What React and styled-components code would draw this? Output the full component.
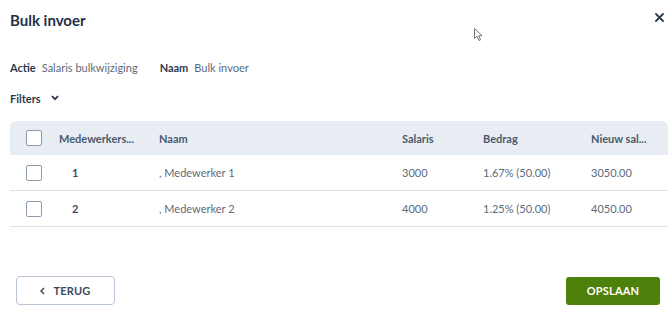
import React from "react";
import styled, { createGlobalStyle } from "styled-components";

const GlobalStyle = createGlobalStyle`
  html, body {
    margin: 0;
    padding: 0;
    background: #ffffff;
  }
  body {
    font-family: "Lato", "Noto Sans", sans-serif;
    color: #2b3a4b;
  }
`;

const Dialog = styled.div`
  position: relative;
  width: 670px;
  height: 311px;
  box-sizing: border-box;
  padding: 0 2px 0 10px;
  overflow: hidden;
`;

const Header = styled.div`
  display: flex;
  align-items: center;
  justify-content: space-between;
  height: 40px;
  padding-left: 0;
`;

const Title = styled.h1`
  margin: 0;
  font-size: 15px;
  font-weight: 700;
  color: #1f3147;
`;

const CloseButton = styled.button`
  border: none;
  background: none;
  padding: 0;
  width: 12px;
  height: 12px;
  margin-right: 3px;
  margin-top: -6px;
  display: flex;
  align-items: center;
  justify-content: center;
  cursor: pointer;
`;

const Meta = styled.div`
  display: flex;
  align-items: center;
  height: 16px;
  margin-top: 19px;
  font-size: 11px;
`;

const MetaItem = styled.div`
  display: flex;
  gap: 6px;
  margin-right: ${(p) => p.$gap || 0}px;
`;

const Label = styled.span`
  font-weight: 700;
  color: #2b3a4b;
`;

const Value = styled.span`
  color: #5b6b7d;
`;

const Filters = styled.div`
  display: flex;
  align-items: center;
  gap: 10px;
  height: 16px;
  margin-top: 15px;
  font-size: 11px;
  font-weight: 700;
  color: #2b3a4b;
`;

const Table = styled.div`
  margin-top: 15px;
  width: 658px;
`;

const Row = styled.div`
  display: grid;
  grid-template-columns: 49px 100px 243px 81px 108px 1fr;
  align-items: center;
  height: ${(p) => (p.$head ? 34 : 35)}px;
  font-size: 11px;
  background: ${(p) => (p.$head ? "#e8edf4" : "transparent")};
  border-radius: ${(p) => (p.$head ? "6px 6px 0 0" : "0")};
  border-bottom: ${(p) => (p.$head ? "none" : "1.5px solid #dde3eb")};
  color: ${(p) => (p.$head ? "#4a5a6d" : "#5b6b7d")};
  font-weight: ${(p) => (p.$head ? 700 : 400)};
`;

const Cell = styled.div`
  padding-left: ${(p) => p.$pad || 0}px;
  white-space: nowrap;
  overflow: hidden;
  font-weight: ${(p) => (p.$bold ? 700 : "inherit")};
  color: ${(p) => (p.$bold ? "#3d4c5e" : "inherit")};
`;

const Checkbox = styled.span`
  display: block;
  width: 14px;
  height: 14px;
  margin-left: 16px;
  border: 1.5px solid #8b9bad;
  border-radius: 2px;
  background: #ffffff;
`;

const Footer = styled.div`
  display: flex;
  justify-content: space-between;
  align-items: center;
  margin-top: 49px;
  padding: 0 8px 0 6px;
`;

const BackButton = styled.button`
  display: flex;
  align-items: center;
  justify-content: center;
  gap: 8px;
  width: 99px;
  height: 29px;
  box-sizing: border-box;
  border: 1.5px solid #b9c5d3;
  border-radius: 4px;
  background: #ffffff;
  font-family: inherit;
  font-size: 11px;
  font-weight: 700;
  color: #3b4a5c;
  letter-spacing: 0.2px;
  cursor: pointer;
`;

const SaveButton = styled.button`
  width: 94px;
  height: 28px;
  border: none;
  border-radius: 3px;
  background: #4e800c;
  color: #ffffff;
  font-family: inherit;
  font-size: 11px;
  font-weight: 700;
  letter-spacing: 0.2px;
  cursor: pointer;
`;

const Pointer = styled.svg`
  position: absolute;
  left: 474px;
  top: 28px;
`;

const rows = [
  { id: 1, naam: ", Medewerker 1", salaris: "3000", bedrag: "1.67% (50.00)", nieuw: "3050.00" },
  { id: 2, naam: ", Medewerker 2", salaris: "4000", bedrag: "1.25% (50.00)", nieuw: "4050.00" },
];

export default function App() {
  return (
    <>
      <GlobalStyle />
      <Dialog>
        <Header>
          <Title>Bulk invoer</Title>
          <CloseButton aria-label="Sluiten">
            <svg width="9" height="9" viewBox="0 0 9 9">
              <path d="M1 1L8 8M8 1L1 8" stroke="#2b3a4b" strokeWidth="1.8" strokeLinecap="round" />
            </svg>
          </CloseButton>
        </Header>

        <Meta>
          <MetaItem $gap={22}>
            <Label>Actie</Label>
            <Value>Salaris bulkwijziging</Value>
          </MetaItem>
          <MetaItem>
            <Label>Naam</Label>
            <Value>Bulk invoer</Value>
          </MetaItem>
        </Meta>

        <Filters>
          Filters
          <svg width="8" height="6" viewBox="0 0 8 6">
            <path d="M1 1.2L4 4.2L7 1.2" fill="none" stroke="#2b3a4b" strokeWidth="1.8" />
          </svg>
        </Filters>

        <Table>
          <Row $head>
            <Checkbox />
            <Cell>Medewerkers...</Cell>
            <Cell>Naam</Cell>
            <Cell>Salaris</Cell>
            <Cell>Bedrag</Cell>
            <Cell>Nieuw sal...</Cell>
          </Row>
          {rows.map((r) => (
            <Row key={r.id}>
              <Checkbox />
              <Cell $pad={13} $bold>{r.id}</Cell>
              <Cell>{r.naam}</Cell>
              <Cell>{r.salaris}</Cell>
              <Cell>{r.bedrag}</Cell>
              <Cell>{r.nieuw}</Cell>
            </Row>
          ))}
        </Table>

        <Footer>
          <BackButton>
            <svg width="5" height="8" viewBox="0 0 5 8">
              <path d="M4 1L1 4L4 7" fill="none" stroke="#3b4a5c" strokeWidth="1.5" />
            </svg>
            TERUG
          </BackButton>
          <SaveButton>OPSLAAN</SaveButton>
        </Footer>

        <Pointer width="10" height="14" viewBox="0 0 10 14">
          <path d="M0.5 0.5L0.5 10.5L3 8.2L5 12.5L6.6 11.8L4.7 7.7L8 7.7Z" fill="#ffffff" stroke="#555" strokeWidth="0.8" />
        </Pointer>
      </Dialog>
    </>
  );
}
